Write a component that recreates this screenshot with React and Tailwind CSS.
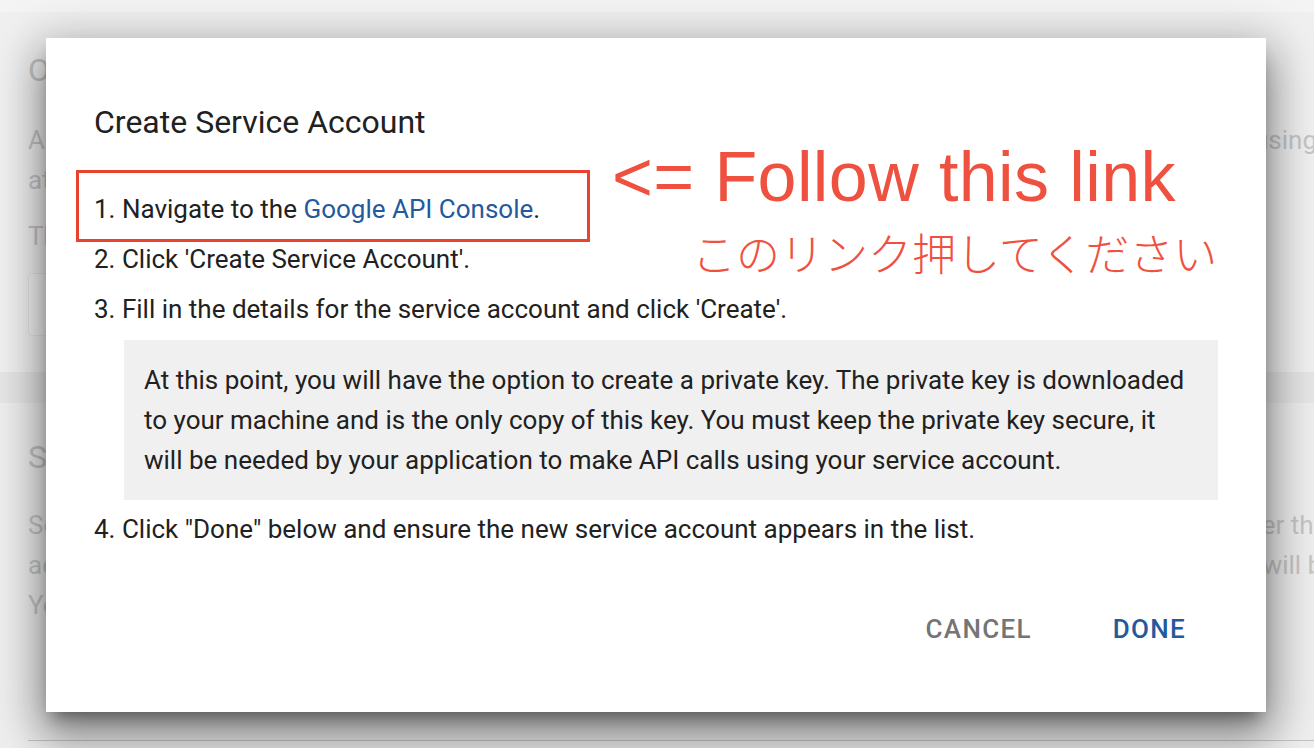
import React from "react";

const ROBOTO = { fontFamily: "Roboto, 'Liberation Sans', sans-serif" };

// faded page lines behind the modal
function BgLine({ left, right, rightClass = "" }) {
  return (
    <div className="flex whitespace-nowrap h-10 leading-10 text-[26px] text-[#c6c6c6]">
      <span className="flex-1 min-w-0 overflow-hidden">{left}</span>
      {right && <span className={"shrink-0 pl-2 " + rightClass}>{right}</span>}
    </div>
  );
}

export default function App() {
  return (
    <div
      className="relative w-[1314px] h-[748px] overflow-hidden bg-[#e8e8e8]"
      style={ROBOTO}
    >
      {/* page behind */}
      <div className="h-3 bg-[#f4f4f4]" />
      <div className="bg-[#f0f0f0] pl-7 pt-[38px] h-[360px]">
        <div className="text-[32px] leading-10 text-[#c4c4c4]">OAuth 2.0 Client IDs</div>
        <div className="mt-[30px]">
          <BgLine
            left="A client ID is used to identify a single app to Google's OAuth servers. If your app runs on multiple platforms, each"
            right="using"
            rightClass="-mr-[3px]"
          />
          <BgLine left="at least one authorized redirect URI." />
          <div className="mt-[16px]">
            <BgLine left="This is the list of client IDs registered for this project." />
          </div>
        </div>
        <div className="mt-[17px] h-[63px] w-[1000px] bg-[#f3f3f3] border border-[#e6e6e6] rounded-sm" />
      </div>
      <div className="h-[31px] bg-[#e6e6e6]" />
      <div className="bg-[#eeeeee] pl-7 pt-[34px] h-[345px]">
        <div className="text-[32px] leading-10 text-[#c4c4c4]">Service accounts</div>
        <div className="mt-[28px]">
          <BgLine
            left="Service accounts are special accounts that belong to your application rather than an individual end user and"
            right="er than"
            rightClass="-mr-[28px]"
          />
          <BgLine
            left="access Google APIs on behalf of the application. The private key of each account"
            right="will be"
            rightClass="-mr-[22px]"
          />
          <BgLine left="You can create a service account below." />
        </div>
        <div className="mt-[115px] h-px bg-[#c4c4c4]" />
      </div>

      {/* dialog */}
      <div className="absolute left-[46px] top-[38px] w-[1220px] h-[674px] bg-white px-12 pt-16 text-[#212121] shadow-[0_24px_38px_3px_rgba(0,0,0,0.3),0_9px_46px_8px_rgba(0,0,0,0.22),0_11px_15px_-7px_rgba(0,0,0,0.4)]">
        <h2 className="text-[32px] leading-10 font-normal">Create Service Account</h2>
        <div className="mt-[42px] text-[26px]">
          <div className="leading-[50px]">
            1. Navigate to the <a className="text-[#245a9d]">Google API Console</a>.
          </div>
          <div className="leading-[50px]">2. Click 'Create Service Account'.</div>
          <div className="leading-[50px]">
            3. Fill in the details for the service account and click 'Create'.
          </div>
          <div className="mt-[6px] ml-[30px] bg-[#f0f0f0] px-5 py-5 leading-10">
            At this point, you will have the option to create a private key. The private key is downloaded
            to your machine and is the only copy of this key. You must keep the private key secure, it
            will be needed by your application to make API calls using your service account.
          </div>
          <div className="mt-1 leading-[50px]">
            4. Click "Done" below and ensure the new service account appears in the list.
          </div>
        </div>
        <div className="mt-[57px] flex justify-end gap-[17px] text-[26px] leading-9 font-medium tracking-[0.05em]">
          <button className="px-8 text-[#757575]">CANCEL</button>
          <button className="px-8 text-[#245a9d]">DONE</button>
        </div>
      </div>

      {/* annotations */}
      <div className="absolute left-[76px] top-[170px] w-[514px] h-[72px] border-[3px] border-[#e8432e]" />
      <div
        className="absolute left-[612px] top-[142px] text-[70px] leading-none tracking-[0.4px] whitespace-nowrap text-[#ef5140]"
        style={{ fontFamily: "'Liberation Sans', Arial, sans-serif" }}
      >
        {"<= Follow this link"}
      </div>
      <div
        className="absolute left-[692px] top-[230px] text-[44px] leading-[44px] font-light whitespace-nowrap text-[#ef5140]"
        style={{ fontFamily: "'Noto Sans CJK JP', 'Noto Sans', sans-serif" }}
      >
        このリンク押してください
      </div>
    </div>
  );
}
